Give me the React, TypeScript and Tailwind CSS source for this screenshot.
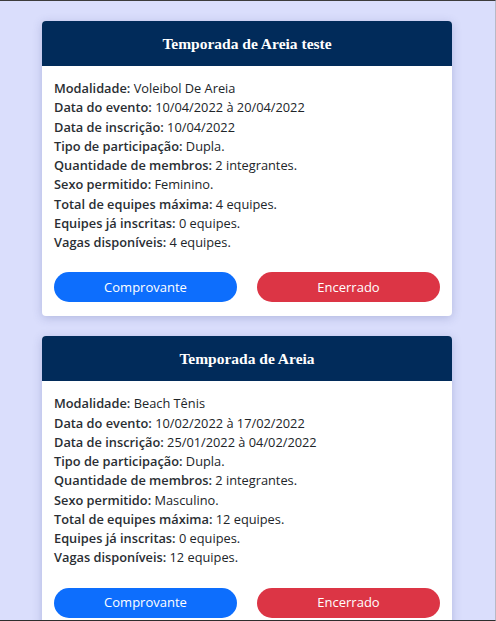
import React from "react";

type Card = { title: string; rows: [string, string][] };

const cards: Card[] = [
  {
    title: "Temporada de Areia teste",
    rows: [
      ["Modalidade:", "Voleibol De Areia"],
      ["Data do evento:", "10/04/2022 à 20/04/2022"],
      ["Data de inscrição:", "10/04/2022"],
      ["Tipo de participação:", "Dupla."],
      ["Quantidade de membros:", "2 integrantes."],
      ["Sexo permitido:", "Feminino."],
      ["Total de equipes máxima:", "4 equipes."],
      ["Equipes já inscritas:", "0 equipes."],
      ["Vagas disponíveis:", "4 equipes."],
    ],
  },
  {
    title: "Temporada de Areia",
    rows: [
      ["Modalidade:", "Beach Tênis"],
      ["Data do evento:", "10/02/2022 à 17/02/2022"],
      ["Data de inscrição:", "25/01/2022 à 04/02/2022"],
      ["Tipo de participação:", "Dupla."],
      ["Quantidade de membros:", "2 integrantes."],
      ["Sexo permitido:", "Masculino."],
      ["Total de equipes máxima:", "12 equipes."],
      ["Equipes já inscritas:", "0 equipes."],
      ["Vagas disponíveis:", "12 equipes."],
    ],
  },
];

export default function App() {
  return (
    <div className="h-[621px] overflow-hidden bg-[#dadefc] border-t border-t-[#3c3c3c] border-b border-b-[#2e2e2e] border-r border-r-[#b8b9c6]">
      <div className="flex flex-col items-center gap-[20px] pt-[20px] pr-px" style={{ fontFamily: '"Open Sans", "Noto Sans", sans-serif' }}>
        {cards.map((c) => (
          <div key={c.title} className="w-[410px] bg-white rounded-[4px] shadow-[0_2px_10px_rgba(60,70,140,0.25)]">
            <div className="h-[45px] bg-[#012b5a] rounded-t-[4px] flex items-center justify-center">
              <span className="text-white font-bold text-[15.5px]" style={{ fontFamily: '"Liberation Serif", serif' }}>
                {c.title}
              </span>
            </div>
            <div className="px-[12px] pt-[13px] pb-[14px]">
              <div className="text-[12.8px] leading-[19.25px] text-[#212529]">
                {c.rows.map(([k, v]) => (
                  <div key={k}>
                    <span className="font-[600] text-[#2a2e33]">{k}</span> {v}
                  </div>
                ))}
              </div>
              <div className="flex gap-[20px] mt-[20px]">
                <button className="flex-1 h-[30px] rounded-full bg-[#0d6efd] text-white text-[13px]">Comprovante</button>
                <button className="flex-1 h-[30px] rounded-full bg-[#dc3545] text-white text-[13px]">Encerrado</button>
              </div>
            </div>
          </div>
        ))}
      </div>
    </div>
  );
}
